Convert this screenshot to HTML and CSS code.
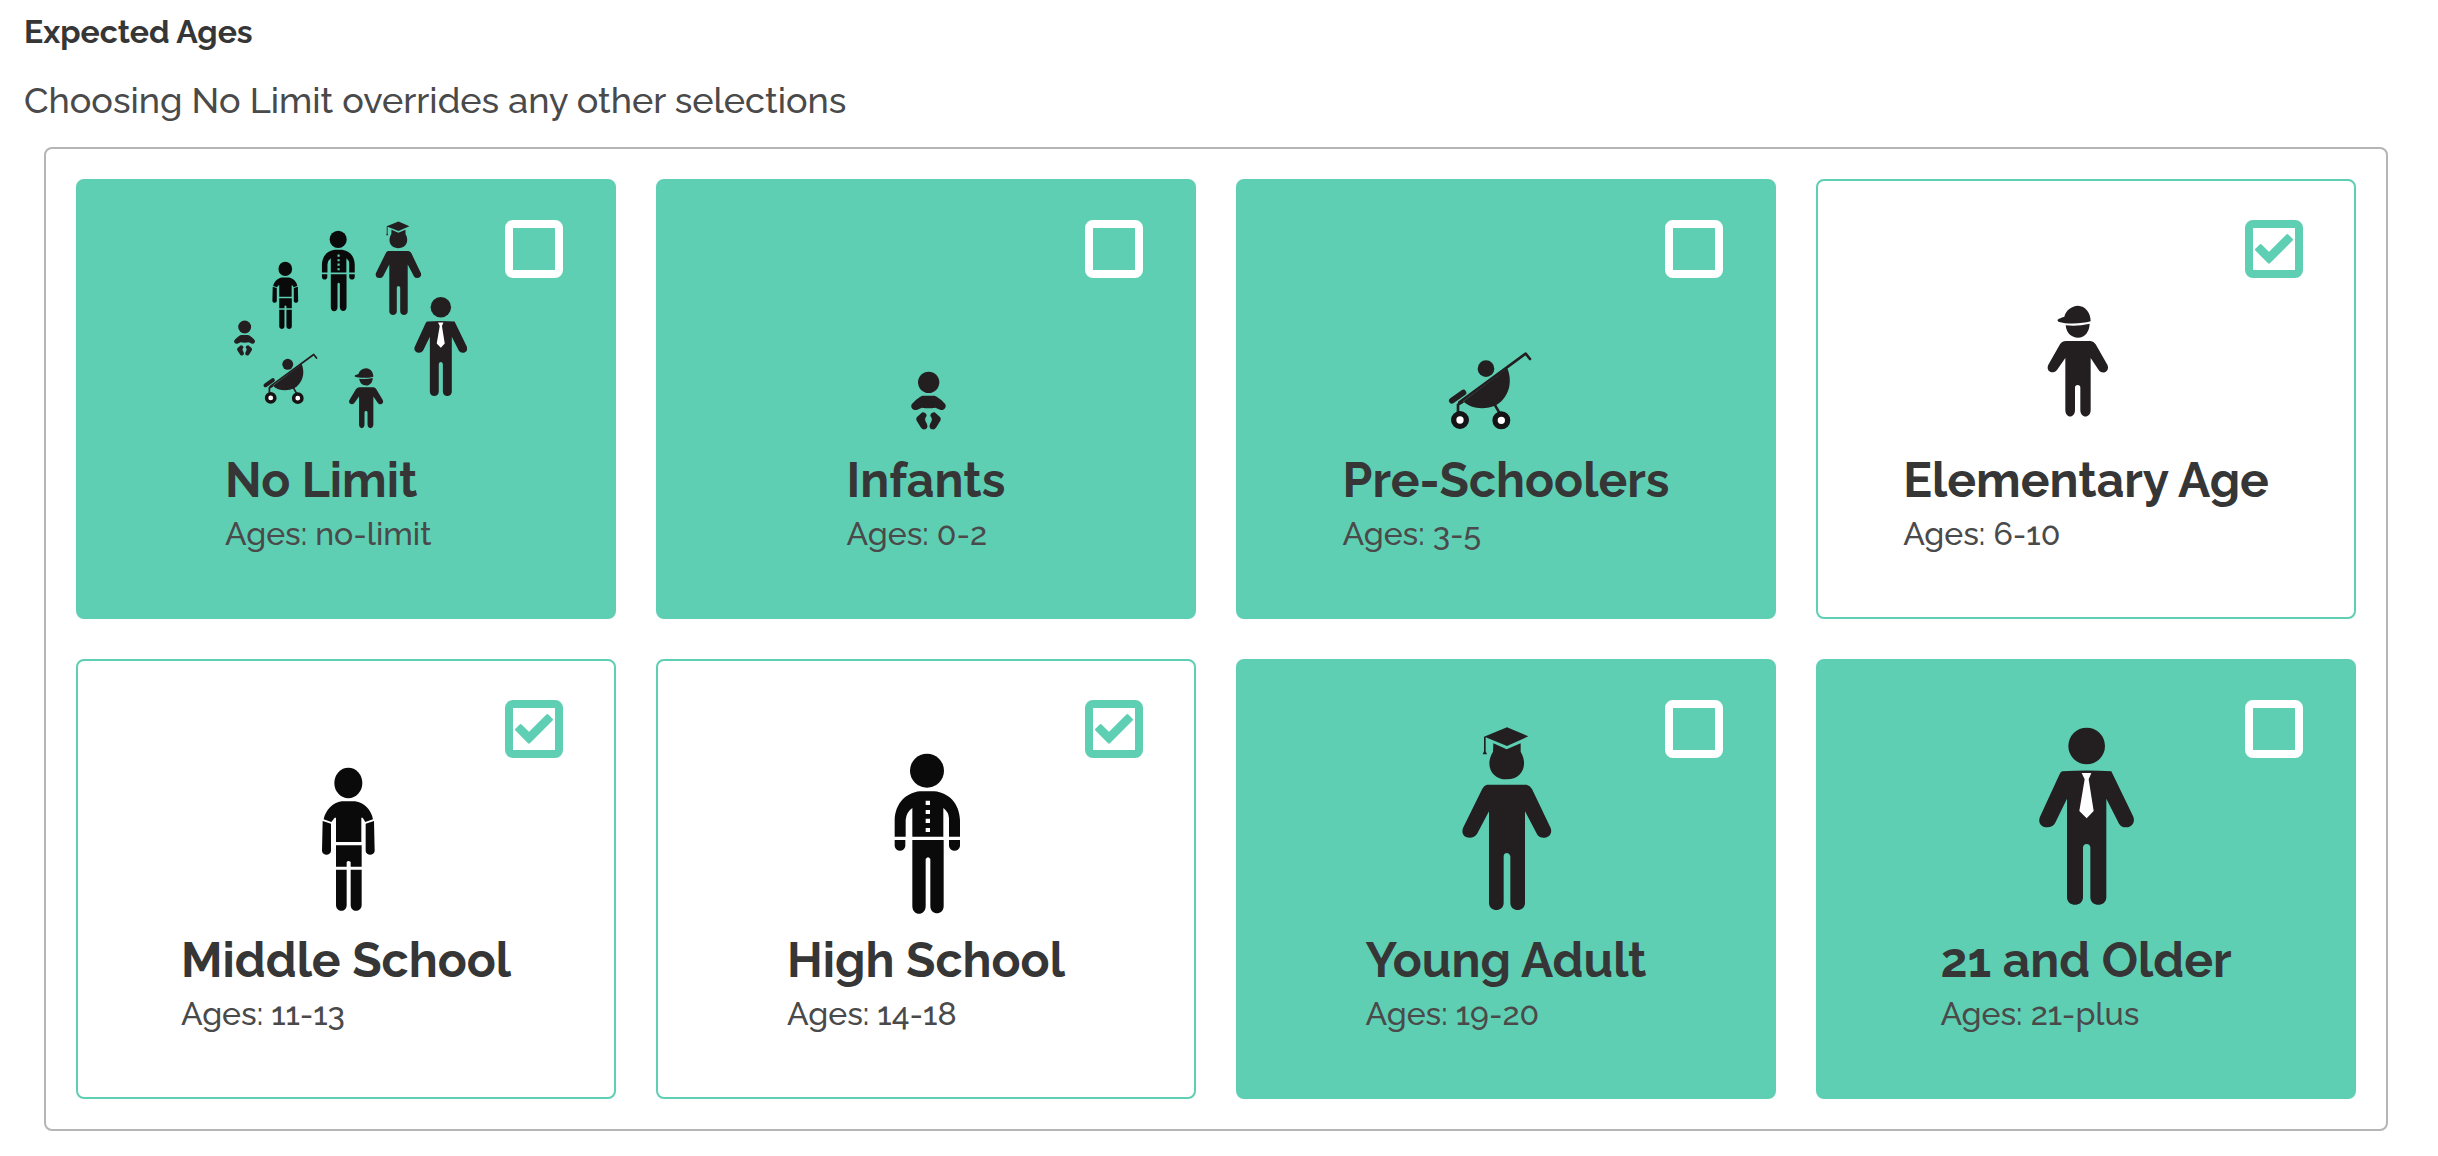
FILE: index.html
```html
<!DOCTYPE html>
<html lang="en">
<head>
<meta charset="utf-8">
<meta name="viewport" content="width=device-width, initial-scale=1">
<title>Expected Ages</title>
<link rel="stylesheet" href="styles.css">
</head>
<body>
<svg class="sprite" aria-hidden="true">
  <defs>
    <g id="infant" fill="#231f20">
      <circle cx="206" cy="97" r="32"/>
      <path d="M188 137H223C233 140 250 154 256 163C260 173 252 182 242 180L226 173Q206 177 186 173L170 180C158 182 151 173 155 163C162 154 178 140 188 137Z"/>
      <path d="M187 187C195 187 200 192 200 198C194 204 194 212 199 218C205 228 203 237 193 238C188 239 185 236 182 232L171 214C168 209 168 205 171 201Z"/>
      <path d="M224 187C216 187 211 192 211 198C217 204 217 212 212 218C206 228 208 237 218 238C223 239 226 236 229 232L240 214C243 209 243 205 240 201Z"/>
    </g>
    <g id="stroller">
      <circle cx="498" cy="116" r="25" fill="#231f20"/>
      <path d="M418 217L617 71L630 87" fill="none" stroke="#231f20" stroke-width="8" stroke-linecap="round" stroke-linejoin="round"/>
      <path d="M430 214L562 115C580 160 564 204 528 226C494 241 452 237 430 214Z" fill="#231f20"/>
      <path d="M396 212L430 188" stroke="#231f20" stroke-width="18" stroke-linecap="round"/>
      <path d="M414 246V224L430 214M524 224L538 248" fill="none" stroke="#231f20" stroke-width="8"/>
      <circle cx="420" cy="270" r="19" fill="#fff" stroke="#151314" stroke-width="16"/>
      <circle cx="544" cy="271" r="19" fill="#fff" stroke="#151314" stroke-width="16"/>
    </g>
    <g id="child" fill="#231f20">
      <path d="M532 360C538 353 548 353 553 350C557 331 575 318 594 317C616 318 632 338 632 364C605 372 560 373 535 365Z"/>
      <path d="M557 376Q594 380 629 371C628 396 614 413 594 413C575 413 559 400 557 376Z"/>
      <path d="M558 423H632Q641 424 647 433L682 494C689 509 677 520 665 517Q659 515 656 510L632 474V630C632 656 601 656 601 630V563Q601 555 593 555Q585 555 585 563V630C585 656 556 656 556 630V474L531 510Q527 516 520 517C507 518 499 507 505 494L540 433Q547 423 558 423Z"/>
    </g>
    <g id="student" fill="#0a0a0a">
      <ellipse cx="565" cy="99" rx="42" ry="46"/>
      <path d="M545 154H585C613 157 634 180 639 208L616 216L608 203H604V276H528V203H524L514 216L491 208C497 180 518 157 545 154Z"/>
      <path d="M488 213L513 221V303C511 318 488 318 486 303ZM642 213L617 221V303C619 318 642 318 644 303Z"/>
      <path d="M528 286H605V350H572V336Q565 330 560 336V350H528ZM528 359H560V465C560 489 528 487 528 465ZM572 359H605V465C605 487 572 489 572 465Z"/>
    </g>
    <g id="teen" fill="#0a0a0a">
      <circle cx="501" cy="92" r="51"/>
      <path fill-rule="evenodd" d="M480 154H523C566 158 598 190 600 240V290H567V235Q566 216 550 204V290H457V204Q439 216 437 240V290H404V240C406 190 438 158 480 154ZM497 182V195H510V182ZM497 210V222H510V210ZM497 236V249H510V236ZM497 264V276H510V264Z"/>
      <path d="M404 300H436V318C434 337 406 337 404 318ZM567 300H600V318C598 337 569 337 567 318ZM457 300H551V498C551 527 511 527 511 498V357Q504 346 497 357V498C497 529 457 529 457 498Z"/>
    </g>
    <g id="graduate" fill="#231f20">
      <path d="M501 52L565 79L501 108L437 82V124L441 133H428L432 124V80Z"/>
      <path d="M460 100L500 118L542 100V125C566 165 546 208 500 208C454 208 434 165 459 125Z"/>
      <path d="M441 224H560Q570 226 576 237L632 354C638 371 626 383 611 383Q598 383 592 374L555 304V578C555 607 511 607 511 578V438Q508 429 501 429Q492 429 491 438V578C491 607 447 607 447 578V304L411 372Q404 383 389 383C373 383 363 371 369 354L427 236Q433 225 441 224Z"/>
    </g>
    <g id="adult">
      <circle cx="560" cy="138" r="55" fill="#231f20"/>
      <path fill="#231f20" d="M487 214Q560 209 634 214L700 350C707 369 693 382 678 382Q663 382 657 371L619 296V592C619 622 571 622 571 592V442Q569 432 560 432Q551 432 549 442V592C549 622 501 622 501 592V296L465 370Q458 382 442 382C425 382 412 369 420 350L478 224Q482 215 487 214Z"/>
      <path fill="#fff" d="M545 219H574L566 238L581 333L560 355L538 333L554 238Z"/>
    </g>
  </defs>
</svg>

<main class="page">
  <h1 class="heading" id="ages-heading">Expected Ages</h1>
  <p class="hint" id="ages-hint">Choosing No Limit overrides any other selections</p>

  <div class="panel" role="group" aria-labelledby="ages-heading" aria-describedby="ages-hint">
    <label class="card">
      <input class="check" type="checkbox" name="ages" value="no-limit">
      <span class="group">
        <svg class="icon icon-wide" viewBox="75 30 726 720" aria-hidden="true">
          <use href="#infant" transform="translate(9 322) scale(.607)"/>
          <use href="#stroller" transform="translate(-63 417) scale(.655)"/>
          <use href="#child" transform="translate(163 333) scale(.565 .541)"/>
          <use href="#student" transform="translate(-21 160) scale(.49 .471)"/>
          <use href="#teen" transform="translate(163 72) scale(.502)"/>
          <use href="#graduate" transform="translate(339 38) scale(.512)"/>
          <use href="#adult" transform="translate(410 245) scale(.558)"/>
        </svg>
        <span class="title">No Limit</span>
        <span class="range">Ages: no-limit</span>
      </span>
    </label>
    <label class="card">
      <input class="check" type="checkbox" name="ages" value="0-2">
      <span class="group">
        <svg class="icon" viewBox="18 -420 360 720" aria-hidden="true"><use href="#infant"/></svg>
        <span class="title">Infants</span>
        <span class="range">Ages: 0-2</span>
      </span>
    </label>
    <label class="card">
      <input class="check" type="checkbox" name="ages" value="3-5">
      <span class="group">
        <svg class="icon" viewBox="378 -360 360 720" aria-hidden="true"><use href="#stroller"/></svg>
        <span class="title">Pre-Schoolers</span>
        <span class="range">Ages: 3-5</span>
      </span>
    </label>
    <label class="card">
      <input class="check" type="checkbox" name="ages" value="6-10" checked>
      <span class="group">
        <svg class="icon" viewBox="438 30 360 720" aria-hidden="true"><use href="#child"/></svg>
        <span class="title">Elementary Age</span>
        <span class="range">Ages: 6-10</span>
      </span>
    </label>
    <label class="card">
      <input class="check" type="checkbox" name="ages" value="11-13" checked>
      <span class="group">
        <svg class="icon" viewBox="378 -180 360 720" aria-hidden="true"><use href="#student"/></svg>
        <span class="title">Middle School</span>
        <span class="range">Ages: 11-13</span>
      </span>
    </label>
    <label class="card">
      <input class="check" type="checkbox" name="ages" value="14-18" checked>
      <span class="group">
        <svg class="icon" viewBox="318 -150 360 720" aria-hidden="true"><use href="#teen"/></svg>
        <span class="title">High School</span>
        <span class="range">Ages: 14-18</span>
      </span>
    </label>
    <label class="card">
      <input class="check" type="checkbox" name="ages" value="19-20">
      <span class="group">
        <svg class="icon" viewBox="318 -60 360 720" aria-hidden="true"><use href="#graduate"/></svg>
        <span class="title">Young Adult</span>
        <span class="range">Ages: 19-20</span>
      </span>
    </label>
    <label class="card">
      <input class="check" type="checkbox" name="ages" value="21-plus">
      <span class="group">
        <svg class="icon" viewBox="378 -30 360 720" aria-hidden="true"><use href="#adult"/></svg>
        <span class="title">21 and Older</span>
        <span class="range">Ages: 21-plus</span>
      </span>
    </label>
  </div>
</main>
</body>
</html>
```
FILE: styles.css
```css
* {
  box-sizing: border-box;
}

body {
  margin: 0;
  background: #fff;
  color: #4a4a4a;
  font-family: Raleway, Lato, sans-serif;
  font-weight: 500;
}

.sprite {
  display: block;
  width: 0;
  height: 0;
}

.page {
  padding: 12px 50px 24px 24px;
}

.heading {
  margin: 0;
  color: #363636;
  font-size: 32px;
  font-weight: 700;
  line-height: 40px;
}

.hint {
  margin: 24px 0 0;
  font-size: 36px;
  line-height: 48px;
}

.panel {
  display: grid;
  grid-template-columns: repeat(4, 1fr);
  gap: 40px;
  margin: 23px 0 0 20px;
  padding: 30px;
  border: 2px solid #b5b5b5;
  border-radius: 8px;
}

.card {
  position: relative;
  display: flex;
  justify-content: center;
  min-height: 440px;
  padding: 29px 24px;
  border: 2px solid #5fcfb4;
  border-radius: 8px;
  background: #5fcfb4;
  cursor: pointer;
}

.card:has(:checked) {
  background: #fff;
}

.check {
  position: absolute;
  top: 39px;
  right: 51px;
  width: 58px;
  height: 58px;
  margin: 0;
  border: 8px solid #fff;
  border-radius: 8px;
  appearance: none;
  cursor: pointer;
}

.check:checked {
  border-color: #5fcfb4;
  background: url("data:image/svg+xml,%3Csvg xmlns='http://www.w3.org/2000/svg' viewBox='24 24 126 126'%3E%3Cpath d='M34 89L47 76L72 101L127 46L140 59L72 127Z' fill='%235fcfb4' stroke='%235fcfb4' stroke-width='8' stroke-linejoin='round'/%3E%3C/svg%3E") center / 100% no-repeat;
}

.group {
  display: flex;
  flex-direction: column;
  align-items: flex-start;
}

.icon {
  align-self: center;
  width: 120px;
  height: 240px;
}

.icon-wide {
  width: 242px;
}

.title {
  color: #363636;
  font-size: 48px;
  font-weight: 700;
  line-height: 60px;
}

.range {
  font-size: 32px;
  line-height: 48px;
}
```
